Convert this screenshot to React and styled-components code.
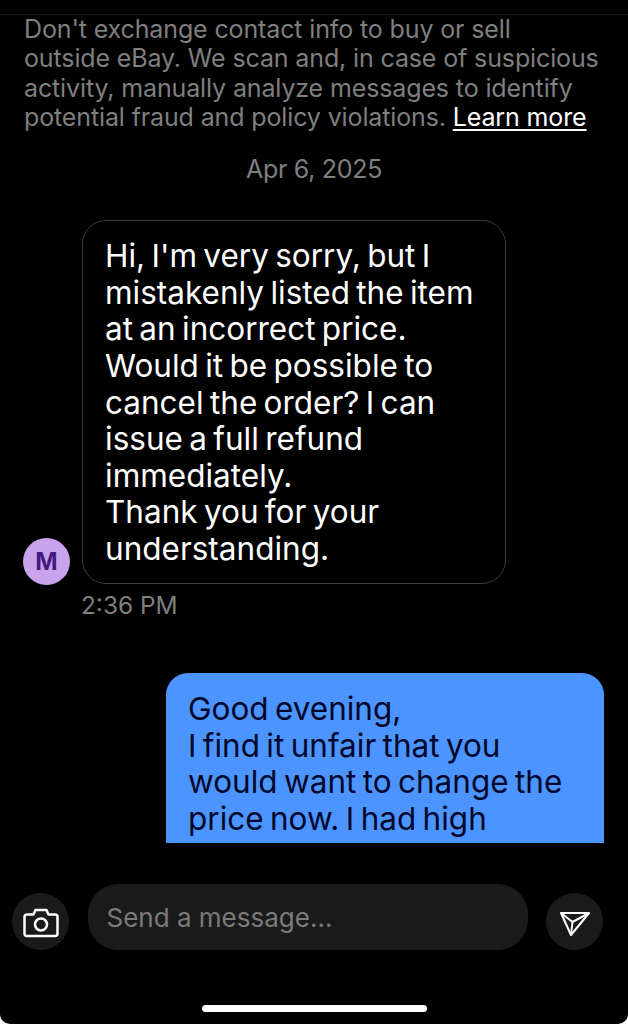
import React from "react";
import styled, { createGlobalStyle } from "styled-components";

const Global = createGlobalStyle`
    html, body {
        margin: 0;
        background: #fff;
    }
    * {
        box-sizing: border-box;
    }
`;

const App = () => {
    return (
        <S.Page>
            <Global />
            <S.TopRule />
            <S.Thread>
                <S.Notice>
                    Don't exchange contact info to buy or sell
                    <br />
                    outside eBay. We scan and, in case of suspicious
                    <br />
                    activity, manually analyze messages to identify
                    <br />
                    potential fraud and policy violations. <S.Link>Learn more</S.Link>
                </S.Notice>
                <S.DateLabel>Apr 6, 2025</S.DateLabel>
                <S.IncomingRow>
                    <S.Avatar>M</S.Avatar>
                    <S.IncomingBubble>
                        Hi, I'm very sorry, but I mistakenly listed the item at an incorrect price. Would it be
                        possible to cancel the order? I can issue a full refund immediately.
                        <br />
                        Thank you for your understanding.
                    </S.IncomingBubble>
                </S.IncomingRow>
                <S.Time>2:36 PM</S.Time>
                <S.OutgoingBubble>
                    Good evening,
                    <br />
                    I find it unfair that you would want to change the price now. I had high
                </S.OutgoingBubble>
            </S.Thread>
            <S.Composer>
                <S.RoundButton>
                    <S.CameraIcon width="36" height="30" viewBox="0 0 36 30" fill="none" stroke="#fff" strokeWidth="2.5" strokeLinejoin="round">
                        <path d="M1.5 9a2.5 2.5 0 0 1 2.5-2.5h6.5l2-4.5h11l2 4.5H32a2.5 2.5 0 0 1 2.5 2.5v16.5A2.5 2.5 0 0 1 32 28H4a2.5 2.5 0 0 1-2.5-2.5z" />
                        <circle cx="18" cy="16.5" r="6" />
                    </S.CameraIcon>
                </S.RoundButton>
                <S.Input>Send a message...</S.Input>
                <S.RoundButton>
                    <S.SendIcon width="32" height="26" viewBox="0 0 32 26" fill="none" stroke="#fff" strokeWidth="2" strokeLinejoin="round">
                        <path d="M2 2h28L12 24z" />
                        <path d="M2 2l11.5 9L30 2M13.5 11L12 24" />
                    </S.SendIcon>
                </S.RoundButton>
            </S.Composer>
            <S.HomeBar />
        </S.Page>
    );
};

export default App;

const S = {
    Page: styled.div`
        width: 628px;
        height: 1024px;
        background: #000;
        border-radius: 0 0 10px 10px;
        display: flex;
        flex-direction: column;
        overflow: hidden;
        font-family: Inter, "Liberation Sans", sans-serif;
    `,
    TopRule: styled.div`
        height: 15px;
        flex: none;
        border-bottom: 1px solid #1c1c1c;
    `,
    Thread: styled.div`
        height: 828px;
        flex: none;
        overflow: hidden;
        display: flex;
        flex-direction: column;
    `,
    Notice: styled.div`
        padding: 0 24px;
        font-size: 25px;
        line-height: 29.3px;
        letter-spacing: -0.13px;
        white-space: nowrap;
        color: #7f7f7f;
    `,
    Link: styled.span`
        color: #fff;
        text-decoration: underline;
        text-underline-offset: 3px;
    `,
    DateLabel: styled.div`
        margin-top: 22px;
        text-align: center;
        font-size: 25px;
        line-height: 30px;
        letter-spacing: -0.3px;
        color: #7f7f7f;
    `,
    IncomingRow: styled.div`
        margin-top: 36px;
        padding-left: 23px;
        display: flex;
        align-items: flex-end;
        gap: 12px;
    `,
    Avatar: styled.div`
        width: 47px;
        height: 47px;
        margin-bottom: -1px;
        border-radius: 50%;
        background: #c9a3ec;
        color: #43197f;
        font-size: 24px;
        font-weight: 700;
        display: flex;
        align-items: center;
        justify-content: center;
        flex: none;
    `,
    IncomingBubble: styled.div`
        width: 424px;
        height: 364px;
        padding: 17px 22px;
        border: 1px solid #3a3a3a;
        border-radius: 24px;
        color: #fff;
        font-size: 31.5px;
        line-height: 36.6px;
        word-spacing: -2.5px;
    `,
    Time: styled.div`
        margin: 6px 0 0 81px;
        color: #7f7f7f;
        font-size: 24.4px;
        line-height: 30px;
    `,
    OutgoingBubble: styled.div`
        margin: 53px 24px 0 auto;
        width: 438px;
        padding: 18px 22px 0;
        flex: 1;
        border-radius: 22px 22px 0 0;
        background: #4c94ff;
        color: #00072a;
        font-size: 31.5px;
        line-height: 36.6px;
        word-spacing: -2.5px;
    `,
    Composer: styled.div`
        margin-top: 41px;
        padding: 0 25px 0 12px;
        height: 66px;
        flex: none;
        display: flex;
        align-items: flex-end;
        justify-content: space-between;
    `,
    RoundButton: styled.div`
        width: 57px;
        height: 57px;
        border-radius: 50%;
        background: #1a1a1a;
        display: flex;
        align-items: center;
        justify-content: center;
        flex: none;
    `,
    CameraIcon: styled.svg`
        margin-top: 2px;
    `,
    SendIcon: styled.svg`
        margin-top: 5px;
    `,
    Input: styled.div`
        width: 440px;
        height: 66px;
        padding-left: 19px;
        border-radius: 30px;
        background: #1a1a1a;
        color: #7a7a7a;
        font-size: 26px;
        display: flex;
        align-items: center;
    `,
    HomeBar: styled.div`
        margin: 55px auto 0;
        width: 225px;
        height: 7px;
        border-radius: 4px;
        background: #fff;
        flex: none;
    `,
};
